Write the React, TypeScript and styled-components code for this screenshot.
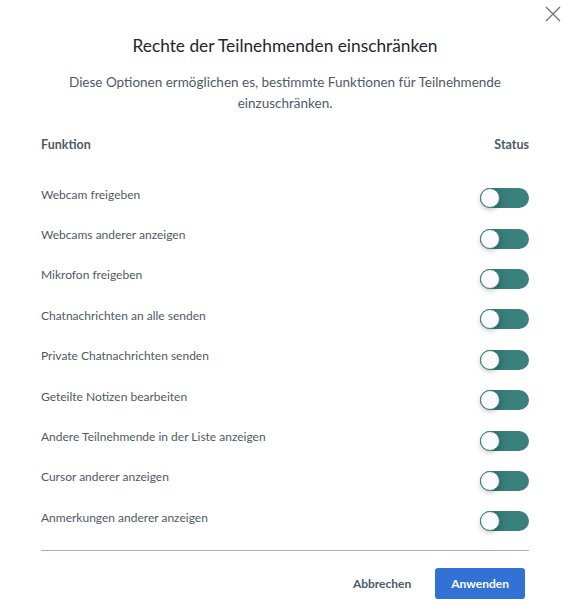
import styled, { createGlobalStyle } from 'styled-components';

const GlobalStyle = createGlobalStyle`
  html, body {
    margin: 0;
    padding: 0;
    background: #ffffff;
  }
  body {
    font-family: Lato, "Open Sans", "Liberation Sans", sans-serif;
    -webkit-font-smoothing: antialiased;
  }
`;

const permissions = [
  'Webcam freigeben',
  'Webcams anderer anzeigen',
  'Mikrofon freigeben',
  'Chatnachrichten an alle senden',
  'Private Chatnachrichten senden',
  'Geteilte Notizen bearbeiten',
  'Andere Teilnehmende in der Liste anzeigen',
  'Cursor anderer anzeigen',
  'Anmerkungen anderer anzeigen',
];

const Modal = styled.div`
  position: relative;
  width: 574px;
  height: 610px;
  box-sizing: border-box;
  padding: 34px 45px 0 41px;
  display: flex;
  flex-direction: column;
`;

const CloseButton = styled.button`
  position: absolute;
  top: 5px;
  right: 12px;
  width: 18px;
  height: 18px;
  padding: 0;
  border: none;
  background: none;
  display: flex;
  align-items: center;
  justify-content: center;
  cursor: pointer;
`;

const Title = styled.h2`
  margin: 0;
  text-align: center;
  font-size: 17.3px;
  font-weight: 400;
  color: #1f262d;
  line-height: 24px;
`;

const Description = styled.p`
  margin: 14px auto 0;
  max-width: 440px;
  text-align: center;
  font-size: 13.5px;
  line-height: 21px;
  color: #4e5a66;
`;

const HeaderRow = styled.div`
  display: flex;
  justify-content: space-between;
  align-items: center;
  margin-top: 22px;
  font-size: 12.5px;
  font-weight: 700;
  color: #4e5a66;
  line-height: 18px;
`;

const List = styled.div`
  display: flex;
  flex-direction: column;
  margin-top: 24px;
`;

const Row = styled.div`
  display: flex;
  justify-content: space-between;
  align-items: center;
  height: 40.4px;
`;

const Label = styled.span`
  font-size: 12px;
  color: #4e5a66;
  margin-top: -8px;
`;

const Toggle = styled.div`
  position: relative;
  width: 49px;
  height: 20px;
  border-radius: 10px;
  background: linear-gradient(90deg, #2f6f6c 0%, #3a807c 60%, #3a807c 100%);
  flex-shrink: 0;
`;

const Knob = styled.span`
  position: absolute;
  left: 0;
  top: 0;
  width: 20px;
  height: 20px;
  box-sizing: border-box;
  border-radius: 50%;
  background: #fafafa;
  border: 1px solid #3a807c;
  box-shadow: 0 2px 5px rgba(0, 0, 0, 0.22);
`;

const Divider = styled.hr`
  margin: 8px 0 0;
  border: none;
  border-top: 1px solid #a6b0b9;
`;

const Footer = styled.div`
  display: flex;
  justify-content: flex-end;
  align-items: center;
  gap: 24px;
  margin-top: 17px;
  padding-right: 4px;
`;

const Button = styled.button<{ $primary?: boolean }>`
  font-family: inherit;
  font-size: 12px;
  font-weight: 700;
  height: 31px;
  padding: 0 ${(p) => (p.$primary ? '16px' : '0')};
  border: none;
  border-radius: 3px;
  cursor: pointer;
  color: ${(p) => (p.$primary ? '#ffffff' : '#4e5a66')};
  background: ${(p) => (p.$primary ? '#3172d4' : 'transparent')};
`;

const App: React.FC = () => {
  return (
    <>
      <GlobalStyle />
      <Modal>
        <CloseButton aria-label="Schließen">
          <svg width="16" height="16" viewBox="0 0 16 16">
            <path d="M1 1 L15 15 M15 1 L1 15" stroke="#6b7480" strokeWidth="1.3" />
          </svg>
        </CloseButton>
        <Title>Rechte der Teilnehmenden einschränken</Title>
        <Description>
          Diese Optionen ermöglichen es, bestimmte Funktionen für Teilnehmende einzuschränken.
        </Description>
        <HeaderRow>
          <span>Funktion</span>
          <span>Status</span>
        </HeaderRow>
        <List>
          {permissions.map((name) => (
            <Row key={name}>
              <Label>{name}</Label>
              <Toggle>
                <Knob />
              </Toggle>
            </Row>
          ))}
        </List>
        <Divider />
        <Footer>
          <Button>Abbrechen</Button>
          <Button $primary>Anwenden</Button>
        </Footer>
      </Modal>
    </>
  );
};

export default App;
